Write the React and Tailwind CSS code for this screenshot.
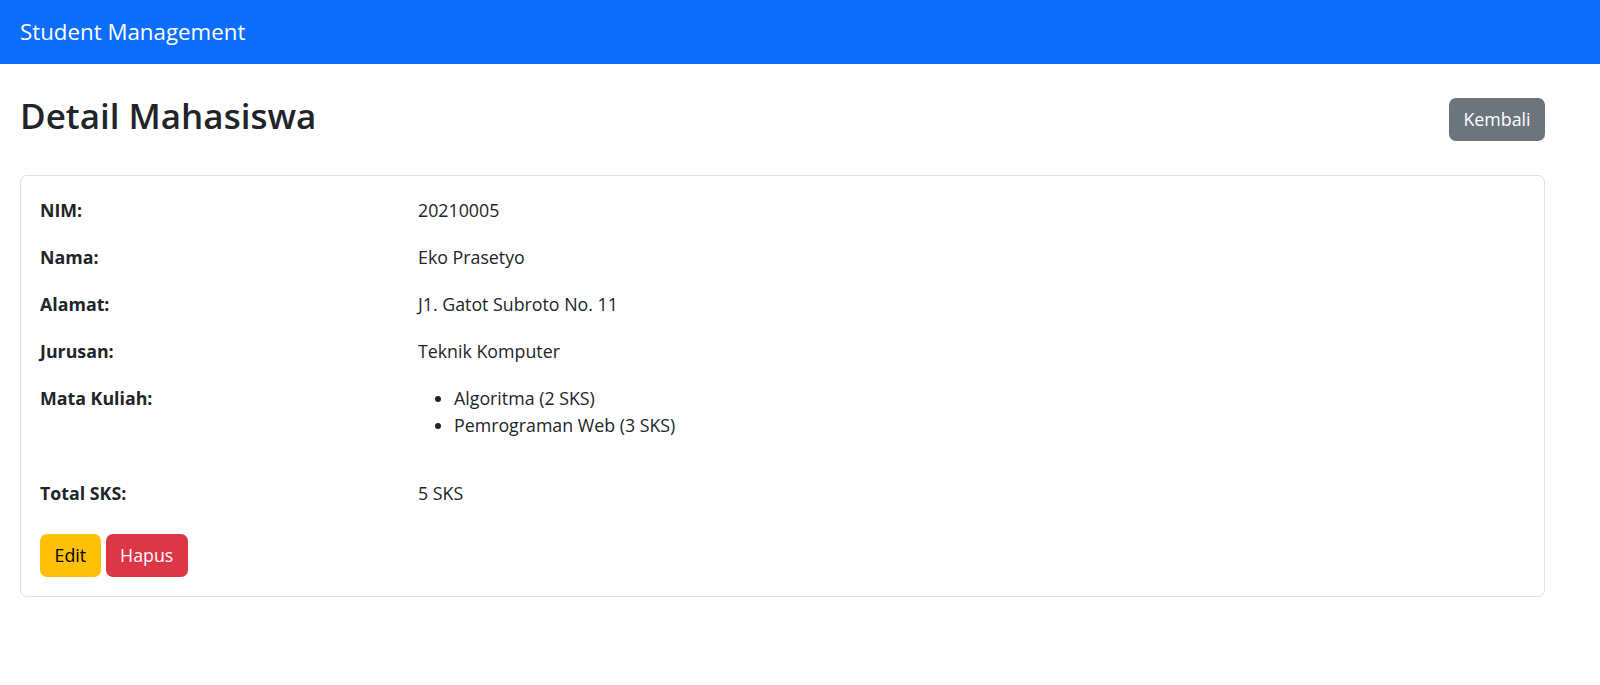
import React from 'react';

const rows = [
  { label: 'NIM:', value: '20210005' },
  { label: 'Nama:', value: 'Eko Prasetyo' },
  { label: 'Alamat:', value: 'J1. Gatot Subroto No. 11' },
  { label: 'Jurusan:', value: 'Teknik Komputer' },
];

const courses = ['Algoritma (2 SKS)', 'Pemrograman Web (3 SKS)'];

export default function App() {
  return (
    <div className="min-h-screen bg-white text-[#212529]" style={{ fontFamily: '"Open Sans", "Noto Sans", sans-serif' }}>
      <nav className="h-[64px] bg-[#0d6efd] flex items-center px-[20px]">
        <span className="text-white text-[22.3px] leading-[30px]">Student Management</span>
      </nav>

      <main className="pl-[20px] pr-[55px]">
        <div className="mt-[34px] flex items-start justify-between">
          <h2 className="text-[35px] leading-[35px] font-semibold">Detail Mahasiswa</h2>
          <button className="h-[43px] px-[14.5px] rounded-[7px] bg-[#6c757d] text-white text-[17.8px] leading-[27px]">Kembali</button>
        </div>

        <div className="mt-[34px] border border-[#dee2e6] rounded-[7px] px-[19px] pt-[21px] pb-[19px] text-[17.8px] leading-[27px]">
          {rows.map(r => (
            <div key={r.label} className="grid grid-cols-[378px_1fr] mb-[20px]">
              <strong className="font-bold">{r.label}</strong>
              <span>{r.value}</span>
            </div>
          ))}
          <div className="grid grid-cols-[378px_1fr] mb-[41px]">
            <strong className="font-bold">Mata Kuliah:</strong>
            <ul className="list-disc pl-[36px]">
              {courses.map(c => <li key={c}>{c}</li>)}
            </ul>
          </div>
          <div className="grid grid-cols-[378px_1fr] mb-[27px]">
            <strong className="font-bold">Total SKS:</strong>
            <span>5 SKS</span>
          </div>
          <div className="flex gap-[5px]">
            <button className="h-[43px] px-[14.5px] rounded-[7px] bg-[#ffc107] text-black text-[17.8px] leading-[27px]">Edit</button>
            <button className="h-[43px] px-[14.5px] rounded-[7px] bg-[#dc3545] text-white text-[17.8px] leading-[27px]">Hapus</button>
          </div>
        </div>
      </main>
    </div>
  );
}
